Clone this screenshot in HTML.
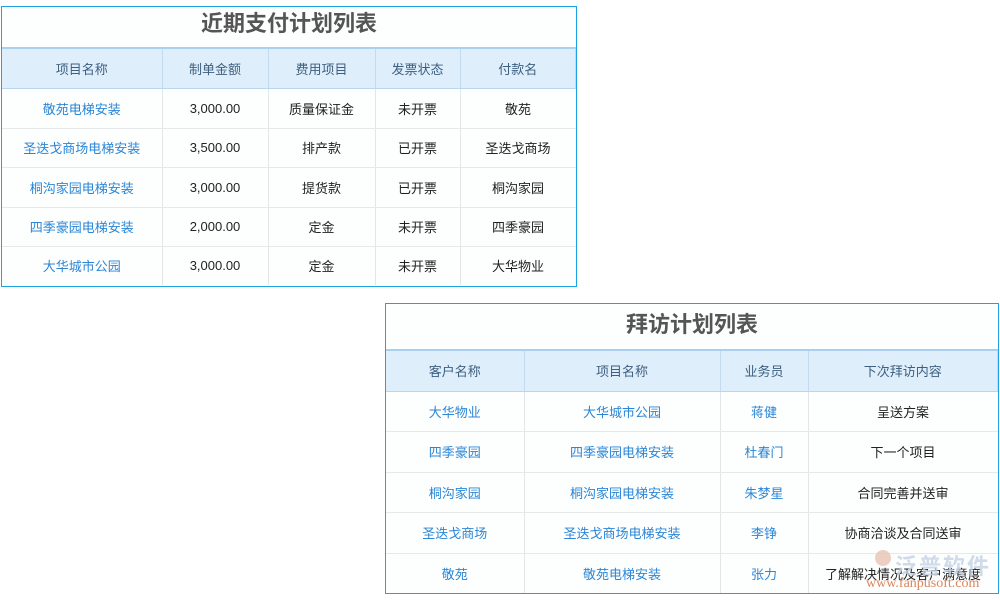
<!DOCTYPE html>
<html><head><meta charset="utf-8"><style>
body{margin:0;width:1000px;height:600px;background:#fff;position:relative;overflow:hidden;font-family:"Liberation Sans","Noto Sans CJK SC",sans-serif;}
.t{position:absolute;border:1px solid #1ba3e2;background:#fdfefe;box-sizing:border-box;}
.title{font-size:22px;font-weight:bold;color:#555;text-align:center;box-sizing:border-box;border-bottom:2px solid #a9d0ee;}
table{border-collapse:collapse;table-layout:fixed;width:100%;}
td{text-align:center;font-size:13px;color:#222;border-right:1px solid #e3e6e8;border-bottom:1px solid #e6e8ea;padding:0;}
td:last-child{border-right:none}
tr:last-child td{border-bottom:none}
tr.h td{background:#dfeefb;color:#3d5f80;border-right:1px solid #c3dbee;border-bottom:1px solid #b9d6ee;}
.b{color:#2b86d6}
</style></head><body>
<div class="t" style="left:1px;top:6px;width:576px;height:281px;">
<div class="title" style="height:42px;line-height:34px;">近期支付计划列表</div>
<table>
<colgroup><col style="width:160px"><col style="width:106px"><col style="width:107px"><col style="width:85px"><col></colgroup>
<tr class="h" style="height:39px"><td>项目名称</td><td>制单金额</td><td>费用项目</td><td>发票状态</td><td>付款名</td></tr>
<tr style="height:40px"><td class="b">敬苑电梯安装</td><td>3,000.00</td><td>质量保证金</td><td>未开票</td><td>敬苑</td></tr>
<tr style="height:39px"><td class="b">圣迭戈商场电梯安装</td><td>3,500.00</td><td>排产款</td><td>已开票</td><td>圣迭戈商场</td></tr>
<tr style="height:40px"><td class="b">桐沟家园电梯安装</td><td>3,000.00</td><td>提货款</td><td>已开票</td><td>桐沟家园</td></tr>
<tr style="height:39px"><td class="b">四季豪园电梯安装</td><td>2,000.00</td><td>定金</td><td>未开票</td><td>四季豪园</td></tr>
<tr style="height:39px"><td class="b">大华城市公园</td><td>3,000.00</td><td>定金</td><td>未开票</td><td>大华物业</td></tr>
</table></div>

<div class="t" style="left:385px;top:303px;width:614px;height:291px;">
<div class="title" style="height:47px;line-height:42px;">拜访计划列表</div>
<table>
<colgroup><col style="width:138px"><col style="width:196px"><col style="width:88px"><col></colgroup>
<tr class="h" style="height:40px"><td>客户名称</td><td>项目名称</td><td>业务员</td><td>下次拜访内容</td></tr>
<tr style="height:40px"><td class="b">大华物业</td><td class="b">大华城市公园</td><td class="b">蒋健</td><td>呈送方案</td></tr>
<tr style="height:41px"><td class="b">四季豪园</td><td class="b">四季豪园电梯安装</td><td class="b">杜春门</td><td>下一个项目</td></tr>
<tr style="height:40px"><td class="b">桐沟家园</td><td class="b">桐沟家园电梯安装</td><td class="b">朱梦星</td><td>合同完善并送审</td></tr>
<tr style="height:41px"><td class="b">圣迭戈商场</td><td class="b">圣迭戈商场电梯安装</td><td class="b">李铮</td><td>协商洽谈及合同送审</td></tr>
<tr style="height:40px"><td class="b">敬苑</td><td class="b">敬苑电梯安装</td><td class="b">张力</td><td>了解解决情况及客户满意度</td></tr>
</table></div>
<div style="position:absolute;left:875px;top:550px;width:16px;height:16px;border-radius:50%;background:#e9c2b3;opacity:.8"></div>
<div style="position:absolute;left:895px;top:549px;font-size:22px;font-weight:bold;color:#c5d3e6;letter-spacing:2px;opacity:.8">泛普软件</div>
<div style="position:absolute;left:866px;top:576px;font-family:'Liberation Serif',serif;font-size:14px;color:#d9865e;">www.fanpusoft.com</div>
</body></html>
